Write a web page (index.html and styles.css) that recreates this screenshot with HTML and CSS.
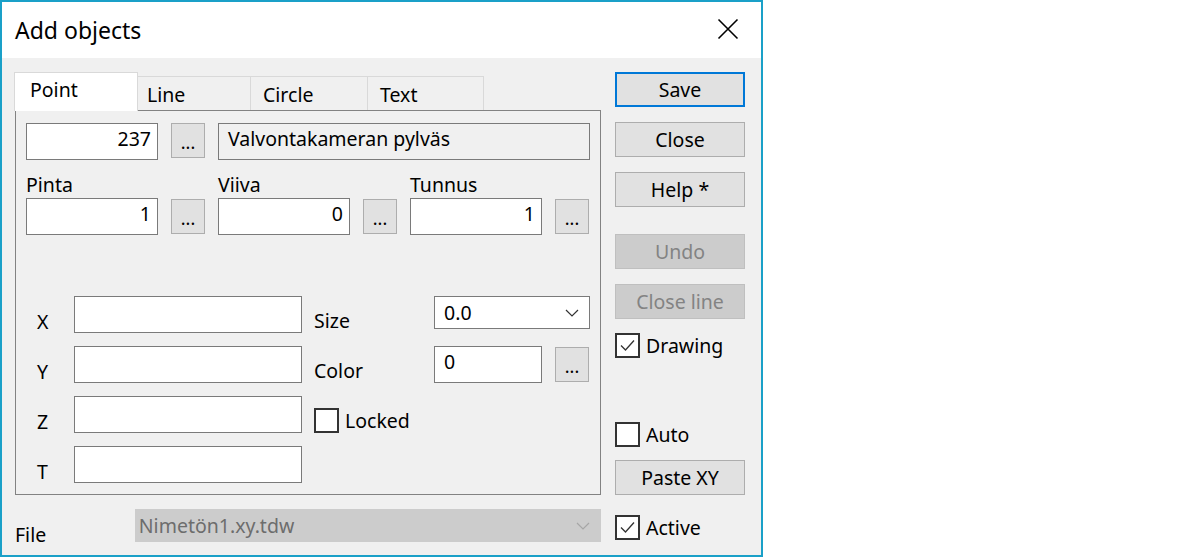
FILE: index.html
```html
<!DOCTYPE html>
<html>
<head>
<meta charset="utf-8">
<link rel="stylesheet" href="styles.css">
</head>
<body>
<div class="dialog">
  <div class="titlebar">
    <span class="title">Add objects</span>
    <svg class="close-x" width="22" height="22" viewBox="0 0 22 22"><path d="M1.5 1.5 L20.5 20.5 M20.5 1.5 L1.5 20.5" stroke="#000" stroke-width="1.6" fill="none"/></svg>
  </div>
  <div class="main">
    <div class="left">
      <div class="tabs">
        <div class="tab active">Point</div>
        <div class="tab t-line">Line</div>
        <div class="tab t-circle">Circle</div>
        <div class="tab t-text">Text</div>
      </div>
      <div class="panel">
        <div class="row1">
          <div class="field num w132">237</div>
          <div class="btn dots">...</div>
          <div class="field name">Valvontakameran pylväs</div>
        </div>
        <div class="row2">
          <div class="group">
            <div class="lbl">Pinta</div>
            <div class="pair"><div class="field num w132">1</div><div class="btn dots">...</div></div>
          </div>
          <div class="group">
            <div class="lbl">Viiva</div>
            <div class="pair"><div class="field num w132">0</div><div class="btn dots">...</div></div>
          </div>
          <div class="group">
            <div class="lbl">Tunnus</div>
            <div class="pair"><div class="field num w132">1</div><div class="btn dots">...</div></div>
          </div>
        </div>
        <div class="coords">
          <div class="clbl">X</div>
          <div class="field coord"></div>
          <div class="clbl2">Size</div>
          <div class="select">
            <span>0.0</span>
            <svg width="14" height="8" viewBox="0 0 14 8"><path d="M1 1 L7 7 L13 1" stroke="#333" stroke-width="1.2" fill="none"/></svg>
          </div>

          <div class="clbl">Y</div>
          <div class="field coord"></div>
          <div class="clbl2">Color</div>
          <div class="pair color-pair"><div class="field color">0</div><div class="btn dots">...</div></div>

          <div class="clbl">Z</div>
          <div class="field coord"></div>
          <div class="check-cell"><span class="cb"></span><span class="cb-text">Locked</span></div>
          <div></div>

          <div class="clbl">T</div>
          <div class="field coord"></div>
          <div></div>
          <div></div>
        </div>
      </div>
      <div class="filerow">
        <div class="file-lbl">File</div>
        <div class="select disabled">
          <span>Nimetön1.xy.tdw</span>
          <svg width="14" height="8" viewBox="0 0 14 8"><path d="M1 1 L7 7 L13 1" stroke="#a6a6a6" stroke-width="1.2" fill="none"/></svg>
        </div>
      </div>
    </div>
    <div class="right">
      <div class="btn side default">Save</div>
      <div class="btn side mt15">Close</div>
      <div class="btn side mt15">Help *</div>
      <div class="btn side mt27 dis">Undo</div>
      <div class="btn side mt15 dis">Close line</div>
      <div class="check mt14"><span class="cb"><svg width="21" height="21" viewBox="0 0 21 21"><path d="M4 10.5 L8.5 15 L17 5.5" stroke="#333" stroke-width="1.3" fill="none"/></svg></span><span class="cb-text">Drawing</span></div>
      <div class="check mt64"><span class="cb"></span><span class="cb-text">Auto</span></div>
      <div class="btn side mt13">Paste XY</div>
      <div class="check mt20"><span class="cb"><svg width="21" height="21" viewBox="0 0 21 21"><path d="M4 10.5 L8.5 15 L17 5.5" stroke="#333" stroke-width="1.3" fill="none"/></svg></span><span class="cb-text">Active</span></div>
    </div>
  </div>
</div>
</body>
</html>
```

FILE: styles.css
```css
* { box-sizing: border-box; }
html, body { margin: 0; padding: 0; background: #fff; }
body {
  font-family: "Noto Sans", "Open Sans", "DejaVu Sans", sans-serif;
  font-size: 19.5px;
  color: #000;
}
.dialog {
  width: 763px;
  height: 557px;
  border: 2px solid #1aa0c8;
  background: #f0f0f0;
  display: flex;
  flex-direction: column;
}
.titlebar {
  height: 56px;
  background: #fff;
  display: flex;
  align-items: center;
  justify-content: space-between;
  padding: 0 22px 0 13px;
  flex: none;
}
.title { font-size: 23px; }
.close-x { display: block; margin-top: -2px; }
.main {
  display: flex;
  padding: 14px 0 0 12px;
  gap: 14px;
}
.left { width: 587px; display: flex; flex-direction: column; }
.tabs { display: flex; height: 38px; align-items: flex-end; position: relative; z-index: 1; }
.tab {
  height: 34px;
  border: 1px solid #d9d9d9;
  border-bottom: none;
  border-left: none;
  background: #f0f0f0;
  padding: 5px 0 0 9px;
  line-height: 26px;
}
.tab.active {
  height: 39px;
  width: 124px;
  background: #fff;
  border-left: 1px solid #d9d9d9;
  padding: 4px 0 0 15px;
  margin-bottom: -1px;
}
.t-line { width: 113px; }
.t-circle { width: 117px; padding-left: 12px; }
.t-text { width: 116px; padding-left: 12px; }
.panel {
  margin-left: 1px;
  height: 385px;
  border: 1px solid #828282;
  padding: 12px 10px 0 10px;
}
.field {
  height: 37px;
  border: 1px solid #7a7a7a;
  background: #fff;
  line-height: 30px;
  padding: 0 6px;
  white-space: nowrap;
}
.num { text-align: right; }
.w132 { width: 132px; }
.btn {
  background: #e1e1e1;
  border: 1px solid #adadad;
  text-align: center;
}
.dots {
  width: 34px;
  height: 35px;
  line-height: 36px;
  font-size: 18px;
}
.row1 { display: flex; gap: 13px; }
.name { width: 372px; background: #f0f0f0; padding-left: 9px; }
.row2 { display: flex; gap: 13px; margin-top: 13px; }
.lbl { height: 25px; line-height: 24px; }
.pair { display: flex; gap: 13px; align-items: flex-start; }
.pair .dots { margin-top: 1px; }
.coords {
  margin-top: 61px;
  display: grid;
  grid-template-columns: 48px 228px 132px 156px;
  grid-auto-rows: 37px;
  row-gap: 13px;
}
.clbl { padding: 13px 0 0 11px; line-height: 26px; }
.clbl2 { padding: 12px 0 0 12px; line-height: 26px; }
.coord { width: 228px; }
.select {
  height: 33px;
  border: 1px solid #7a7a7a;
  background: #fff;
  display: flex;
  align-items: center;
  justify-content: space-between;
  padding: 0 10px 0 9px;
}
.select span { line-height: 30px; }
.color-pair { gap: 13px; }
.color { width: 108px; padding-left: 9px; }
.check-cell { display: flex; align-items: center; gap: 6px; padding-left: 12px; margin-top: 12px; height: 25px; }
.cb {
  width: 25px;
  height: 25px;
  border: 2px solid #333;
  background: #fff;
  flex: none;
  display: flex;
  align-items: center;
  justify-content: center;
}
.cb svg { display: block; }
.cb-text { line-height: 24px; }
.filerow {
  display: flex;
  margin-top: 14px;
  align-items: flex-start;
}
.file-lbl { width: 120px; padding-top: 13px; line-height: 26px; margin-left: 1px; }
.select.disabled {
  width: 467px;
  background: #cccccc;
  border-color: #cccccc;
  color: #6d6d6d;
  padding-left: 3px;
}
.right { width: 130px; display: flex; flex-direction: column; }
.side { height: 35px; line-height: 33px; width: 130px; }
.side.default { border: 2px solid #0078d7; line-height: 31px; }
.side.dis { background: #cccccc; border-color: #bfbfbf; color: #838383; }
.check { display: flex; align-items: center; gap: 6px; height: 25px; }
.mt13 { margin-top: 13px; }
.mt14 { margin-top: 14px; }
.mt15 { margin-top: 15px; }
.mt20 { margin-top: 20px; }
.mt27 { margin-top: 27px; }
.mt64 { margin-top: 64px; }
```
